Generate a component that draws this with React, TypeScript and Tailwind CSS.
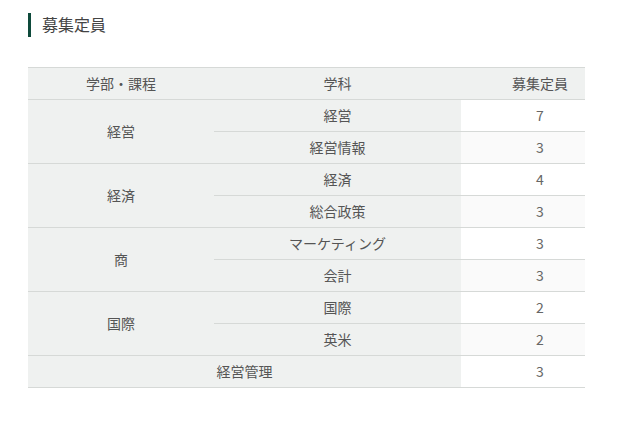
import React from "react";

// 募集定員 table

interface Group {
  faculty: string;
  rows: { dept: string; count: number }[];
}

const groups: Group[] = [
  { faculty: "経営", rows: [{ dept: "経営", count: 7 }, { dept: "経営情報", count: 3 }] },
  { faculty: "経済", rows: [{ dept: "経済", count: 4 }, { dept: "総合政策", count: 3 }] },
  { faculty: "商", rows: [{ dept: "マーケティング", count: 3 }, { dept: "会計", count: 3 }] },
  { faculty: "国際", rows: [{ dept: "国際", count: 2 }, { dept: "英米", count: 2 }] },
];

const font = { fontFamily: '"Noto Sans CJK JP", "Noto Sans", sans-serif' };

export default function App() {
  let rowIndex = 0;

  return (
    <div className="w-[629px] h-[433px] bg-white text-[#555]" style={font}>
      <div className="pt-[13px] pl-[28px]">
        <h2 className="flex items-center h-[24px] border-l-[3px] border-[#0e4a3b] pl-[11px] text-[16px] leading-none text-[#444] pb-[2px]">
          募集定員
        </h2>
      </div>

      <div className="pl-[28px] pt-[30px]">
        <table className="w-[557px] border-collapse text-[14px] leading-none table-fixed">
          <colgroup>
            <col className="w-[186px]" />
            <col className="w-[247px]" />
            <col className="w-[124px]" />
          </colgroup>
          <thead>
            <tr className="h-[32px] bg-[#eff1f0] border-y border-[#d6d9d7]">
              <th className="font-normal text-center pb-[2px]">学部・課程</th>
              <th className="font-normal text-center pb-[2px]">学科</th>
              <th className="font-normal text-center pl-[34px] pb-[2px]">募集定員</th>
            </tr>
          </thead>
          <tbody>
            {groups.map((g) =>
              g.rows.map((r, i) => {
                const stripe = rowIndex++ % 2 === 1 ? "bg-[#fafafa]" : "bg-white";
                return (
                  <tr key={g.faculty + r.dept} className="h-[32px]">
                    {i === 0 && (
                      <td
                        rowSpan={g.rows.length}
                        className="bg-[#eff1f0] text-center border-b border-[#d6d9d7] pb-[2px]"
                      >
                        {g.faculty}
                      </td>
                    )}
                    <td className="bg-[#eff1f0] text-center border-b border-[#d6d9d7] pb-[2px]">{r.dept}</td>
                    <td className={`${stripe} text-center text-[#666] pl-[34px] border-b border-[#d6d9d7] pb-[2px]`}>
                      {r.count}
                    </td>
                  </tr>
                );
              })
            )}
            <tr className="h-[32px]">
              <td colSpan={2} className="bg-[#eff1f0] text-center border-b border-[#d6d9d7] pb-[2px]">
                経営管理
              </td>
              <td className="bg-white text-center text-[#666] pl-[34px] border-b border-[#d6d9d7] pb-[2px]">3</td>
            </tr>
          </tbody>
        </table>
      </div>
    </div>
  );
}
